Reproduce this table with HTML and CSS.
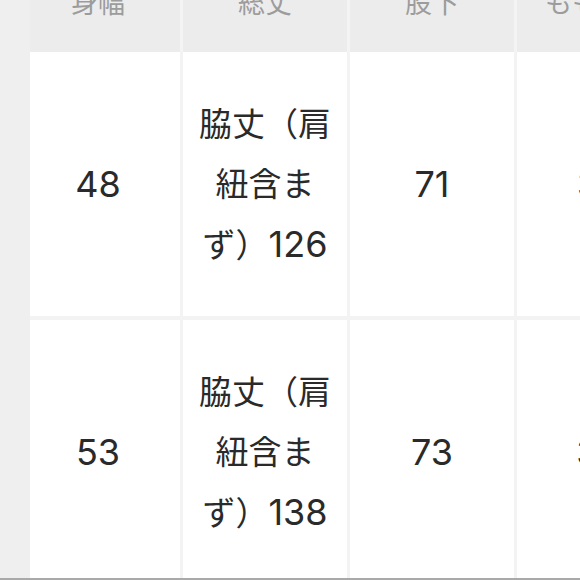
FILE: index.html
```html
<!DOCTYPE html>
<html lang="ja">
<head>
<meta charset="utf-8">
<title>サイズ表</title>
<link rel="stylesheet" href="styles.css">
</head>
<body>
<div class="screen">
  <div class="table">
    <div class="head">
      <div class="hcell">身幅</div>
      <div class="hcell">総丈</div>
      <div class="hcell">股下</div>
      <div class="hcell">もも周り</div>
    </div>
    <div class="body">
      <div class="cell"><p class="txt"><span class="num">48</span></p></div>
      <div class="cell"><p class="txt">脇丈（肩紐含まず）<span class="num">126</span></p></div>
      <div class="cell"><p class="txt"><span class="num">71</span></p></div>
      <div class="cell"><p class="txt"><span class="num">32</span></p></div>
      <div class="cell"><p class="txt"><span class="num">53</span></p></div>
      <div class="cell"><p class="txt">脇丈（肩紐含まず）<span class="num">138</span></p></div>
      <div class="cell"><p class="txt"><span class="num">73</span></p></div>
      <div class="cell"><p class="txt"><span class="num">34</span></p></div>
    </div>
  </div>
  <div class="strip"></div>
</div>
</body>
</html>
```
FILE: styles.css
```css
html, body {
  margin: 0;
  padding: 0;
  background: #ffffff;
}

.screen {
  position: relative;
  width: 580px;
  height: 580px;
  overflow: hidden;
  box-sizing: border-box;
  border-bottom: 2px solid #a9a9a9;
  font-family: "Inter", "Noto Sans CJK JP", sans-serif;
  color: #2a2a2a;
}

.table {
  margin-top: -20px;
  margin-left: 16px;
  width: 665px;
}

.head {
  display: grid;
  grid-template-columns: repeat(4, 164px);
  column-gap: 3px;
  background: #f4f4f4;
  height: 72px;
}

.hcell {
  background: #ececec;
  color: #9c9c9c;
  font-size: 27px;
  line-height: 30px;
  padding-top: 9px;
  text-align: center;
  white-space: nowrap;
  overflow: hidden;
}

.body {
  display: grid;
  grid-template-columns: repeat(4, 164px);
  grid-auto-rows: 264px;
  column-gap: 3px;
  row-gap: 4px;
  background: #f3f3f3;
}

.cell {
  background: #ffffff;
  display: flex;
  align-items: center;
  justify-content: center;
  padding: 0 10px;
  min-width: 0;
}

.txt {
  margin: 0;
  width: 100%;
  text-align: center;
  font-size: 33px;
  line-height: 60px;
}

.num {
  font-size: 36px;
}

.strip {
  position: absolute;
  left: 0;
  top: 0;
  width: 30px;
  height: 100%;
  background: #efefef;
}
```
